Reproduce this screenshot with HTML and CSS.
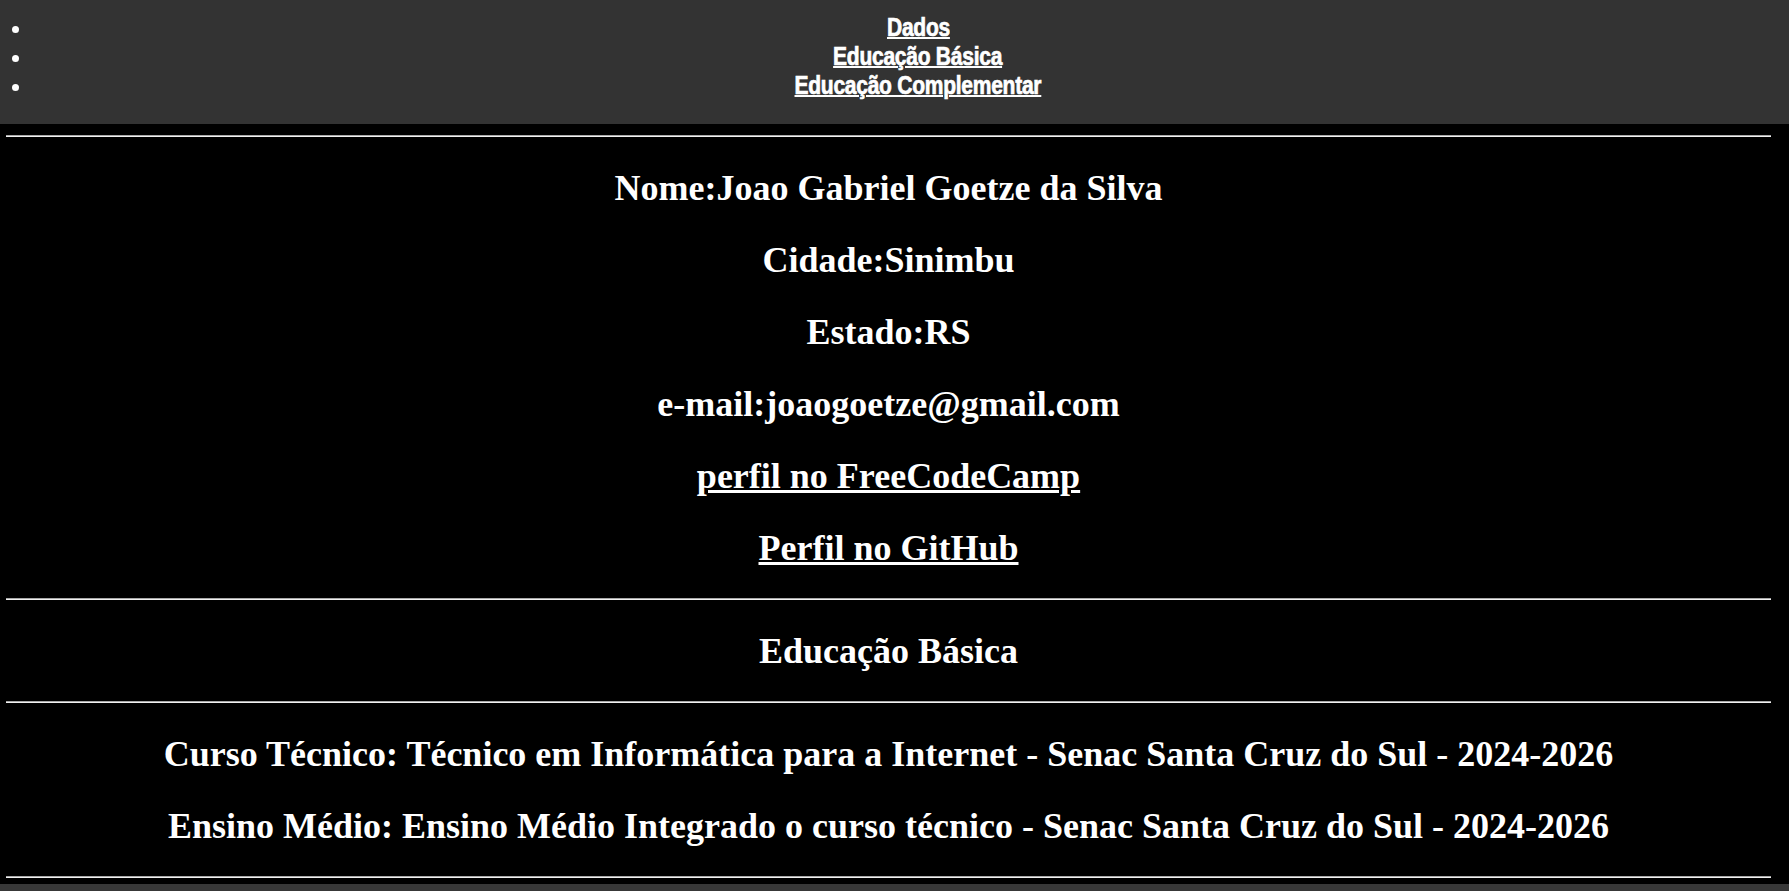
FILE: index.html
```html
<!DOCTYPE html>
<html lang="pt-BR">
<head>
<meta charset="utf-8">
<title>Currículo</title>
<link rel="stylesheet" href="styles.css">
</head>
<body>
<header class="topbar">
  <ul class="nav">
    <li><a class="nav-link" href="#dados">Dados</a></li>
    <li><a class="nav-link" href="#basica">Educação Básica</a></li>
    <li><a class="nav-link" href="#complementar">Educação Complementar</a></li>
  </ul>
</header>
<main class="content">
  <div class="inner">
    <hr class="rule">
    <section id="dados" class="block">
      <p class="line">Nome:Joao Gabriel Goetze da Silva</p>
      <p class="line">Cidade:Sinimbu</p>
      <p class="line">Estado:RS</p>
      <p class="line">e-mail:joaogoetze@gmail.com</p>
      <p class="line"><a href="#">perfil no FreeCodeCamp</a></p>
      <p class="line"><a href="#">Perfil no GitHub</a></p>
    </section>
    <hr class="rule">
    <section id="basica" class="block">
      <p class="line">Educação Básica</p>
    </section>
    <hr class="rule">
    <section id="complementar" class="block">
      <p class="line">Curso Técnico: Técnico em Informática para a Internet - Senac Santa Cruz do Sul - 2024-2026</p>
      <p class="line">Ensino Médio: Ensino Médio Integrado o curso técnico - Senac Santa Cruz do Sul - 2024-2026</p>
    </section>
    <hr class="rule">
  </div>
</main>
</body>
</html>
```
FILE: styles.css
```css
html, body {
  margin: 0;
  padding: 0;
}
body {
  background: #383838;
  color: #fff;
  font-family: "Liberation Serif", "Times New Roman", serif;
}
.topbar {
  background: #333333;
  height: 124px;
  box-sizing: border-box;
}
.nav {
  margin: 0;
  padding: 13px 0 0 32px;
  list-style: disc outside;
  color: #fff;
}
.nav li {
  text-align: center;
  font-family: "Liberation Sans", Arial, sans-serif;
  font-weight: bold;
  font-size: 25px;
  line-height: 29px;
}
.nav li::marker {
  font-size: 22px;
}
.nav-link {
  display: inline-block;
  margin-left: 15px;
  color: #fff;
  text-decoration: underline;
  text-decoration-thickness: 2px;
  -webkit-text-stroke: 0.7px #fff;
  letter-spacing: -0.3px;
  transform: scaleX(0.84);
}
.content {
  background: #000;
  padding: 11px 0 6px;
}
.inner {
  margin: 0 18px 0 6px;
}
.rule {
  margin: 0;
  height: 0;
  border: 0;
  border-top: 1px solid #a8a8a8;
  border-bottom: 1px solid #f0f0f0;
}
.block {
  padding: 31px 0 29px;
}
.line {
  margin: 0;
  text-align: center;
  font-weight: bold;
  font-size: 36px;
  line-height: 41px;
}
.line + .line {
  margin-top: 31px;
}
.line a {
  color: #fff;
  text-decoration: underline;
}
```
